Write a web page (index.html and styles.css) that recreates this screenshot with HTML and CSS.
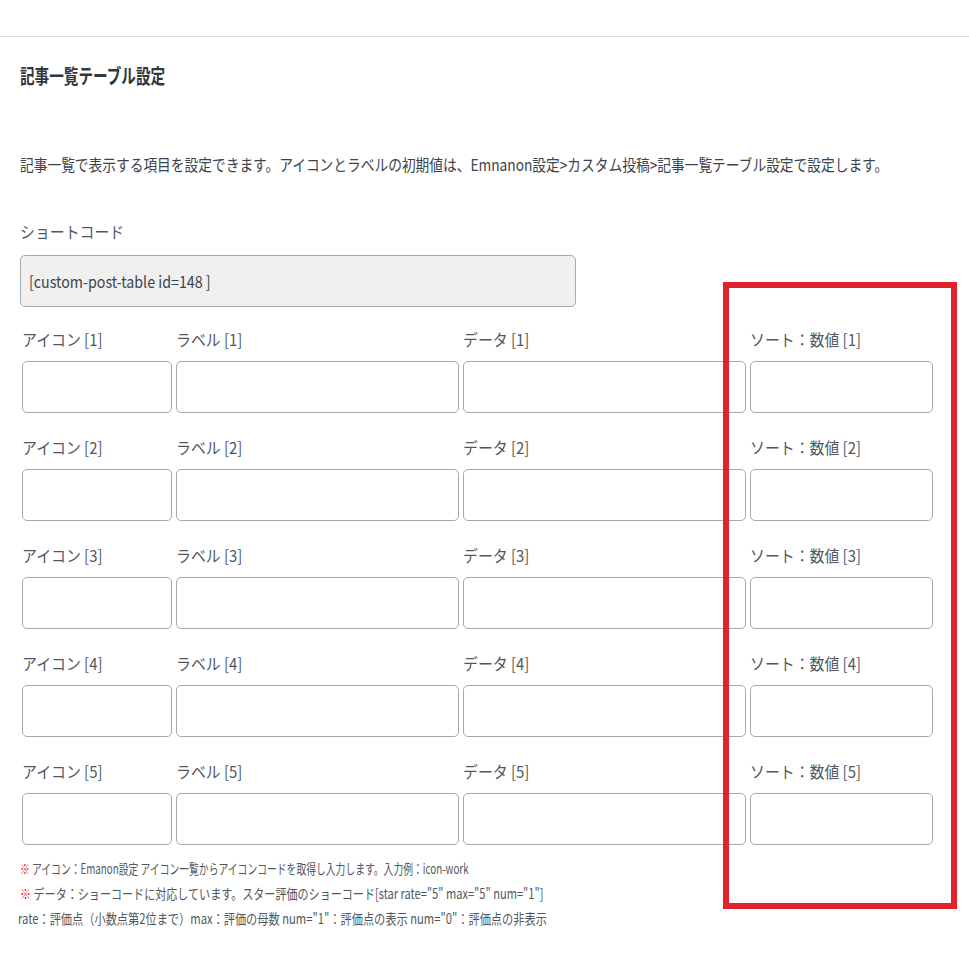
FILE: index.html
```html
<!DOCTYPE html>
<html lang="ja">
<head>
<meta charset="utf-8">
<title>記事一覧テーブル設定</title>
<link rel="stylesheet" href="styles.css">
</head>
<body>
<div class="page">
  <div class="divider"></div>
  <section class="panel">
    <h2 class="title"><span class="cx cx-title">記事一覧テーブル設定</span></h2>
    <p class="desc"><span class="cx cx-desc">記事一覧で表示する項目を設定できます。アイコンとラベルの初期値は、Emnanon設定&gt;カスタム投稿&gt;記事一覧テーブル設定で設定します。</span></p>

    <div class="field">
      <div class="label"><span class="cx cx-label">ショートコード</span></div>
      <div class="code-input"><span class="cx cx-code">[custom-post-table id=148 ]</span></div>
    </div>

    <div class="grid">
      <div class="row">
        <div class="cell"><div class="label"><span class="cx cx-label">アイコン [1]</span></div><div class="input"></div></div>
        <div class="cell"><div class="label"><span class="cx cx-label">ラベル [1]</span></div><div class="input"></div></div>
        <div class="cell"><div class="label"><span class="cx cx-label">データ [1]</span></div><div class="input"></div></div>
        <div class="cell"><div class="label"><span class="cx cx-label">ソート：数値 [1]</span></div><div class="input"></div></div>
      </div>
      <div class="row">
        <div class="cell"><div class="label"><span class="cx cx-label">アイコン [2]</span></div><div class="input"></div></div>
        <div class="cell"><div class="label"><span class="cx cx-label">ラベル [2]</span></div><div class="input"></div></div>
        <div class="cell"><div class="label"><span class="cx cx-label">データ [2]</span></div><div class="input"></div></div>
        <div class="cell"><div class="label"><span class="cx cx-label">ソート：数値 [2]</span></div><div class="input"></div></div>
      </div>
      <div class="row">
        <div class="cell"><div class="label"><span class="cx cx-label">アイコン [3]</span></div><div class="input"></div></div>
        <div class="cell"><div class="label"><span class="cx cx-label">ラベル [3]</span></div><div class="input"></div></div>
        <div class="cell"><div class="label"><span class="cx cx-label">データ [3]</span></div><div class="input"></div></div>
        <div class="cell"><div class="label"><span class="cx cx-label">ソート：数値 [3]</span></div><div class="input"></div></div>
      </div>
      <div class="row">
        <div class="cell"><div class="label"><span class="cx cx-label">アイコン [4]</span></div><div class="input"></div></div>
        <div class="cell"><div class="label"><span class="cx cx-label">ラベル [4]</span></div><div class="input"></div></div>
        <div class="cell"><div class="label"><span class="cx cx-label">データ [4]</span></div><div class="input"></div></div>
        <div class="cell"><div class="label"><span class="cx cx-label">ソート：数値 [4]</span></div><div class="input"></div></div>
      </div>
      <div class="row">
        <div class="cell"><div class="label"><span class="cx cx-label">アイコン [5]</span></div><div class="input"></div></div>
        <div class="cell"><div class="label"><span class="cx cx-label">ラベル [5]</span></div><div class="input"></div></div>
        <div class="cell"><div class="label"><span class="cx cx-label">データ [5]</span></div><div class="input"></div></div>
        <div class="cell"><div class="label"><span class="cx cx-label">ソート：数値 [5]</span></div><div class="input"></div></div>
      </div>
    </div>

    <div class="notes">
      <div class="note"><span class="cx cx-note1"><span class="mark">※</span> アイコン：Emanon設定 アイコン一覧からアイコンコードを取得し入力します。入力例：icon-work</span></div>
      <div class="note"><span class="cx cx-note2"><span class="mark">※</span> データ：ショーコードに対応しています。スター評価のショーコード[star rate="5" max="5" num="1"]</span></div>
      <div class="note note-sub"><span class="cx cx-note3">rate：評価点（小数点第2位まで）max：評価の母数 num="1"：評価点の表示 num="0"：評価点の非表示</span></div>
    </div>
  </section>
  <div class="highlight"></div>
</div>
</body>
</html>
```

FILE: styles.css
```css
* { box-sizing: border-box; }

html, body {
  margin: 0;
  padding: 0;
  background: #ffffff;
}

body {
  font-family: "Noto Sans CJK JP", "Noto Sans", sans-serif;
  color: #50575e;
}

.page {
  position: relative;
  width: 969px;
  min-height: 969px;
  padding-top: 36px;
  overflow: hidden;
}

.divider {
  height: 1px;
  background: #dcdcde;
}

.panel {
  padding-left: 20px;
}

.cx {
  display: inline-block;
  white-space: nowrap;
  transform-origin: 0 50%;
}

.title {
  margin: 25px 0 0;
  height: 28px;
  line-height: 28px;
  font-size: 20px;
  font-weight: 700;
  color: #32373c;
}
.cx-title { transform: scaleX(0.73); }

.desc {
  margin: 62px 0 0;
  height: 24px;
  line-height: 24px;
  font-size: 16px;
  color: #3c434a;
  overflow: hidden;
}
.cx-desc { transform: scaleX(0.857); }

.field {
  margin-top: 43px;
}

.label {
  height: 24px;
  line-height: 24px;
  font-size: 16px;
  color: #50575e;
}
.cx-label { transform: scaleX(0.93); }

.code-input {
  margin-top: 12px;
  width: 556px;
  height: 52px;
  background: #f0f0f1;
  border: 1px solid #a7aaad;
  border-radius: 5px;
  padding-left: 8px;
  display: flex;
  align-items: center;
  font-size: 16px;
  color: #3c434a;
}
.cx-code { transform: scaleX(0.89); }

.grid {
  margin-top: 20px;
  margin-left: 2px;
  display: flex;
  flex-direction: column;
  gap: 22px;
}

.row {
  display: grid;
  grid-template-columns: 150px 283px 283px 183px;
  column-gap: 4px;
}

.input {
  margin-top: 10px;
  height: 52px;
  border: 1px solid #a7aaad;
  border-radius: 5px;
  background: #ffffff;
}

.notes {
  margin-top: 11px;
}

.note {
  height: 25px;
  line-height: 25px;
  font-size: 14px;
  color: #50575e;
  overflow: hidden;
}
.note-sub { margin-left: -2px; }
.cx-note1 { transform: scaleX(0.70); }
.cx-note2 { transform: scaleX(0.79); }
.cx-note3 { transform: scaleX(0.80); }

.mark { color: #e0161f; }

.highlight {
  position: absolute;
  left: 723px;
  top: 282px;
  width: 234px;
  height: 627px;
  border: 6px solid #e2212a;
  pointer-events: none;
}
```
